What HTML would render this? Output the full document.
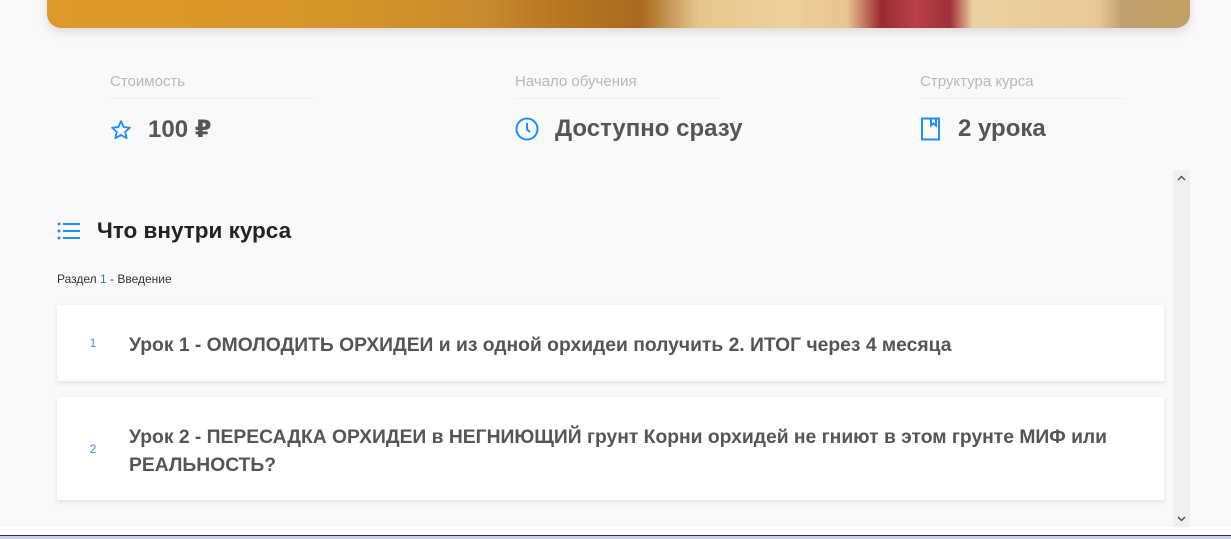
<!DOCTYPE html>
<html><head><meta charset="utf-8"><style>
body{margin:0;width:1231px;height:538px;background:#f9f9f9;font-family:"Liberation Sans","DejaVu Sans",sans-serif;position:relative;overflow:hidden}
.hero{position:absolute;left:47px;top:-20px;width:1143px;height:48px;border-radius:0 0 14px 14px;box-shadow:0 4px 10px rgba(0,0,0,.12);
background:linear-gradient(90deg,#de9a28 0%,#d69528 25%,#c98a2c 38%,#b8761e 45%,#a86a20 52%,#e6c68e 57%,#ecd09a 65%,#e8c490 70%,#9a2a30 73%,#b8404a 76%,#a03038 79%,#ead0a0 81%,#e8c898 92%,#c0a070 94%,#c2a062 100%)}
.stat{position:absolute;top:73px;width:205px}
.lbl{font-size:15px;color:#b8b8b8;padding-bottom:8px;border-bottom:1px solid #eee}
.val{margin-top:16px;font-size:24px;color:#555;display:flex;align-items:center;gap:16px;font-weight:bold;white-space:nowrap}
.val svg{flex:none}
.title{position:absolute;left:57px;top:218px;font-size:22.5px;font-weight:bold;color:#222;display:flex;align-items:center;gap:16px}
.sec{position:absolute;left:57px;top:272px;font-size:12px;color:#333}
.card{position:absolute;left:57px;width:1107px;background:#fff;box-shadow:0 2px 5px rgba(0,0,0,.1);display:flex;align-items:center}
.card .n{width:72px;text-align:center;color:#3a8ee6;font-size:12px;flex:none}
.card .t{font-size:19.3px;font-weight:bold;color:#555;line-height:28px;white-space:nowrap;padding-top:6px}
.sb{position:absolute;left:1173px;top:170px;width:17px;height:357px;background:#f0f0f0}
</style></head><body>
<div class="hero"></div>
<div class="stat" style="left:110px"><div class="lbl">Стоимость</div><div class="val"><svg width="22" height="22" viewBox="0 0 24 24" fill="none" stroke="#1e8fff" stroke-width="2" stroke-linejoin="round"><path d="M12 2.5l2.9 6.3 6.8.7-5.1 4.6 1.5 6.8L12 17.4l-6.1 3.5 1.5-6.8-5.1-4.6 6.8-.7z"/></svg>100 ₽</div></div>
<div class="stat" style="left:515px"><div class="lbl">Начало обучения</div><div class="val"><svg width="24" height="24" viewBox="0 0 24 24" fill="none" stroke="#1e8fff" stroke-width="2"><circle cx="12" cy="12" r="10.5"/><path d="M12 6v6.5l3 2.5"/></svg><span>Доступно сразу</span></div></div>
<div class="stat" style="left:920px"><div class="lbl">Структура курса</div><div class="val"><svg width="22" height="24" viewBox="0 0 22 24" fill="none" stroke="#1e8fff" stroke-width="2"><rect x="2" y="1.5" width="17" height="21"/><path d="M11 1.5v7l2.5-2 2.5 2v-7"/></svg>2 урока</div></div>
<div class="title"><svg width="24" height="20" viewBox="0 0 24 20" fill="#1e8fff"><circle cx="2" cy="3" r="1.5"/><circle cx="2" cy="10" r="1.5"/><circle cx="2" cy="17" r="1.5"/><rect x="6" y="2" width="17" height="2"/><rect x="6" y="9" width="17" height="2"/><rect x="6" y="16" width="17" height="2"/></svg>Что внутри курса</div>
<div class="sec">Раздел <span style="color:#3a6fc0">1</span> - Введение</div>
<div class="card" style="top:305px;height:76px"><div class="n">1</div><div class="t">Урок 1 - ОМОЛОДИТЬ ОРХИДЕИ и из одной орхидеи получить 2. ИТОГ через 4 месяца</div></div>
<div class="card" style="top:397px;height:103px"><div class="n">2</div><div class="t">Урок 2 - ПЕРЕСАДКА ОРХИДЕИ в НЕГНИЮЩИЙ грунт Корни орхидей не гниют в этом грунте МИФ или<br>РЕАЛЬНОСТЬ?</div></div>
<div class="sb"><svg style="position:absolute;top:5px;left:4px" width="9" height="6" viewBox="0 0 9 6" fill="none" stroke="#555" stroke-width="1.5"><path d="M1 5l3.5-3.5L8 5"/></svg><svg style="position:absolute;bottom:5px;left:4px" width="9" height="6" viewBox="0 0 9 6" fill="none" stroke="#555" stroke-width="1.5"><path d="M1 1l3.5 3.5L8 1"/></svg></div>
<div style="position:absolute;left:0;top:527px;width:1231px;height:8px;background:#fff"></div>
<div style="position:absolute;left:0;top:535px;width:1231px;height:3px;background:#c8d0e8;border-top:1px solid #333"></div>
</body></html>
